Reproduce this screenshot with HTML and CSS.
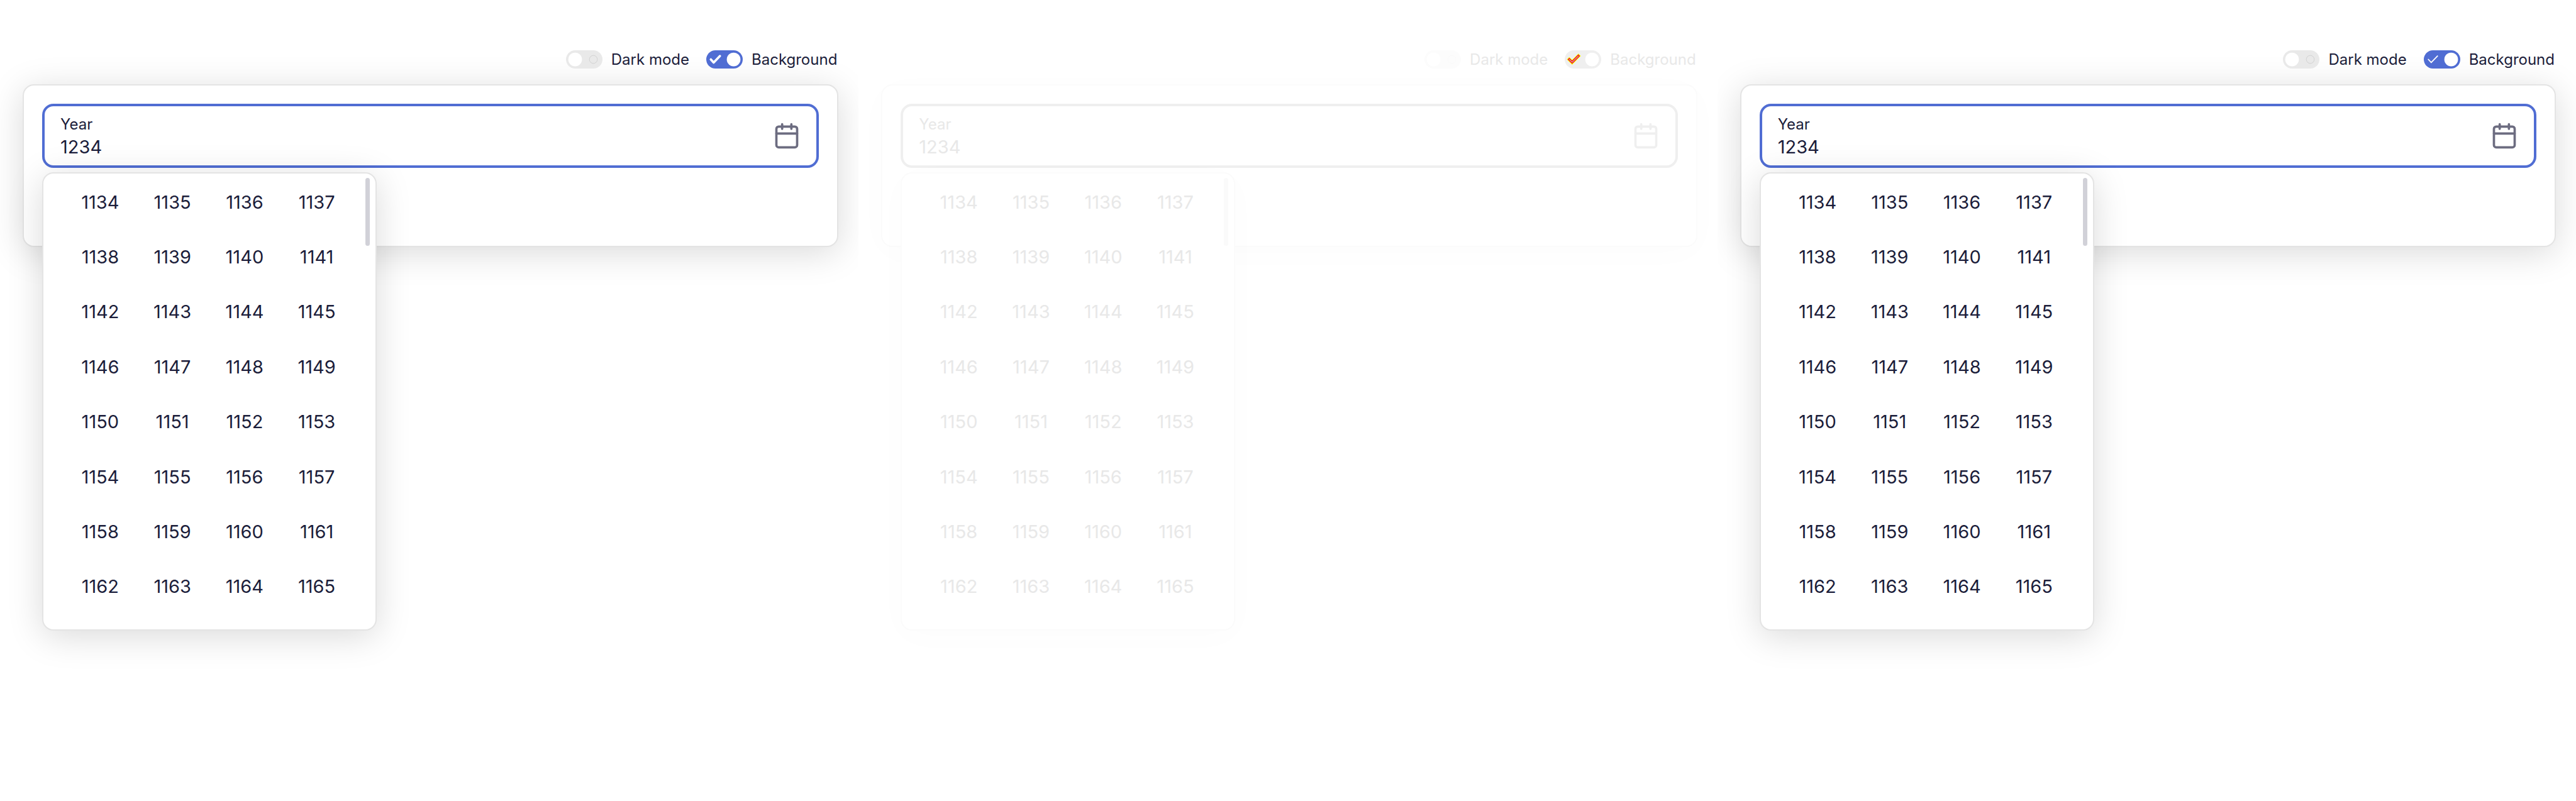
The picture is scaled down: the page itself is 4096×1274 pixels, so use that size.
FILE: index.html
```html
<!DOCTYPE html>
<html lang="en">
<head>
<meta charset="utf-8">
<title>Year picker</title>
<link rel="stylesheet" href="styles.css">
</head>
<body>
<main class="panels">
  <section class="panel">
    <div class="toolbar">
      <label class="toggle"><span class="switch"><input type="checkbox"><svg viewBox="0 0 64 32" aria-hidden="true"><circle class="thumb" cx="16" cy="16" r="12"/><circle class="ring" cx="48" cy="16" r="7"/></svg></span>Dark mode</label>
      <label class="toggle"><span class="switch"><input type="checkbox" checked><svg viewBox="0 0 64 32" aria-hidden="true"><path class="tick tick-bold" d="M8 16l5 5.500L24 10"/><circle class="thumb" cx="48" cy="16" r="12"/></svg></span>Background</label>
    </div>
    <div class="card">
      <div class="picker">
        <div class="field">
          <div class="entry"><label for="year-a">Year</label><input id="year-a" type="text" value="1234"></div>
          <button class="open" type="button" aria-label="Open calendar"><svg viewBox="0 0 48 48"><rect x="6" y="8" width="36" height="36" rx="4"/><path d="M6 20H42M16 4v8M32 4v8"/></svg></button>
        </div>
        <div class="menu"><div class="years"></div><span class="scrollbar"></span></div>
      </div>
    </div>
  </section>

  <section class="panel faint">
    <div class="toolbar">
      <label class="toggle"><span class="switch"><input type="checkbox"><svg viewBox="0 0 64 32" aria-hidden="true"><circle class="thumb" cx="16" cy="16" r="12"/><circle class="ring" cx="48" cy="16" r="7"/></svg></span>Dark mode</label>
      <label class="toggle"><span class="switch"><input type="checkbox" checked><svg viewBox="0 0 64 32" aria-hidden="true"><path class="mark mark-outer" d="M8 16l5 5L24 10"/><path class="mark mark-middle" d="M8 16l5 5L24 10"/><path class="mark mark-inner" d="M8 16l5 5L24 10"/><circle class="thumb" cx="48" cy="16" r="12"/></svg></span>Background</label>
    </div>
    <div class="card">
      <div class="picker">
        <div class="field">
          <div class="entry"><label for="year-b">Year</label><input id="year-b" type="text" value="1234"></div>
          <button class="open" type="button" aria-label="Open calendar"><svg viewBox="0 0 48 48"><rect x="6" y="8" width="36" height="36" rx="4"/><path d="M6 20H42M16 4v8M32 4v8"/></svg></button>
        </div>
        <div class="menu"><div class="years"></div><span class="scrollbar"></span></div>
      </div>
    </div>
  </section>

  <section class="panel">
    <div class="toolbar">
      <label class="toggle"><span class="switch"><input type="checkbox"><svg viewBox="0 0 64 32" aria-hidden="true"><circle class="thumb" cx="16" cy="16" r="12"/><circle class="ring" cx="48" cy="16" r="7"/></svg></span>Dark mode</label>
      <label class="toggle"><span class="switch"><input type="checkbox" checked><svg viewBox="0 0 64 32" aria-hidden="true"><path class="tick" d="M8 16l5 5.500L24 10"/><circle class="thumb" cx="48" cy="16" r="12"/></svg></span>Background</label>
    </div>
    <div class="card">
      <div class="picker">
        <div class="field">
          <div class="entry"><label for="year-c">Year</label><input id="year-c" type="text" value="1234"></div>
          <button class="open" type="button" aria-label="Open calendar"><svg viewBox="0 0 48 48"><rect x="6" y="8" width="36" height="36" rx="4"/><path d="M6 20H42M16 4v8M32 4v8"/></svg></button>
        </div>
        <div class="menu"><div class="years"></div><span class="scrollbar"></span></div>
      </div>
    </div>
  </section>
</main>
<script src="years.js"></script>
</body>
</html>
```

FILE: styles.css
```css
* { box-sizing: border-box; }

body {
  margin: 0;
  background: #fff;
  font-family: Inter, "Liberation Sans", sans-serif;
}

input, button { font: inherit; color: inherit; }

.panels {
  display: grid;
  grid-template-columns: repeat(3, 1fr);
  min-height: 100vh;
}

.panel {
  --text: #1b1d3a;
  --accent: #506dd3;
  --off: #e9e9e9;
  --ring: #cfcfcf;
  --line: #e4e4e4;
  --icon: #6c6c80;
  --bar: #d1d1d8;
  --shade: rgba(0, 0, 0, 0.15);
  padding: 80px 32px 0 36px;
  overflow: hidden;
  color: var(--text);
}

.faint {
  --text: #e8e8e8;
  --accent: #efefef;
  --off: #fcfcfc;
  --ring: #f9f9f9;
  --line: #fbfbfb;
  --icon: #efefef;
  --bar: #fafafa;
  --shade: rgba(0, 0, 0, 0.015);
}

.toolbar {
  display: flex;
  justify-content: flex-end;
  gap: 27px;
  padding-right: 2px;
  margin-bottom: 25px;
  position: relative;
  z-index: 1;
}

.toggle {
  display: flex;
  align-items: center;
  gap: 14px;
  font-size: 24px;
  line-height: 29px;
}

.switch {
  display: grid;
  width: 58px;
  height: 29px;
}

.switch > * { grid-area: 1 / 1; }

.switch input {
  appearance: none;
  width: 58px;
  height: 29px;
  margin: 0;
  border-radius: 15px;
  background: var(--off);
}

.switch input:checked { background: var(--accent); }

.switch svg {
  width: 58px;
  height: 29px;
  pointer-events: none;
}

.thumb { fill: #fff; }
.ring { fill: none; stroke: var(--ring); stroke-width: 1; }

.tick {
  fill: none;
  stroke: #fff;
  stroke-width: 2;
  stroke-linecap: round;
  stroke-linejoin: round;
}
.tick-bold { stroke-width: 4; }

.mark { fill: none; stroke-linecap: square; }
.mark-outer { stroke: #ff0; stroke-width: 6; }
.mark-middle { stroke: #e5131d; stroke-width: 4; }
.mark-inner { stroke: #fff; stroke-width: 1; }

.card {
  padding: 29px 29px 124px;
  border: 2px solid var(--line);
  border-radius: 18px;
  background: #fff;
  box-shadow: 0 9px 55px var(--shade);
}

.picker { position: relative; }

.field {
  display: flex;
  align-items: center;
  justify-content: space-between;
  padding: 10px 25px;
  border: 4px solid var(--accent);
  border-radius: 18px;
}

.entry {
  display: flex;
  flex: 1;
  flex-direction: column;
  gap: 2px;
  padding-top: 4px;
}

.entry label { font-size: 24px; line-height: 30px; }

.entry input {
  width: 100%;
  height: 38px;
  padding: 0;
  border: 0;
  outline: 0;
  background: none;
  font-size: 29px;
  line-height: 38px;
}

.open {
  padding: 0;
  border: 0;
  background: none;
}

.open svg {
  display: block;
  width: 44px;
  height: 44px;
  fill: none;
  stroke: var(--icon);
  stroke-width: 4;
  stroke-linecap: round;
}

.menu {
  position: absolute;
  top: calc(100% + 7px);
  left: 0;
  width: 532px;
  padding: 2px 36px 24px 33px;
  border: 2px solid var(--line);
  border-radius: 18px;
  background: #fff;
  box-shadow: 0 9px 55px var(--shade);
}

.years {
  display: grid;
  grid-template: repeat(8, 1fr) / repeat(4, 1fr);
  height: 699px;
}

.years button {
  padding: 0;
  border: 0;
  background: none;
  font-size: 29px;
  line-height: 38px;
}

.scrollbar {
  position: absolute;
  top: 7px;
  right: 9px;
  width: 7px;
  height: 108px;
  border-radius: 4px;
  background: var(--bar);
}
```

FILE: years.js
```js
const FIRST_YEAR = 1134;
const VISIBLE_YEARS = 32;

document.querySelectorAll(".years").forEach((list) => {
  for (let i = 0; i < VISIBLE_YEARS; i += 1) {
    const button = document.createElement("button");
    button.type = "button";
    button.textContent = String(FIRST_YEAR + i);
    list.append(button);
  }
});
```
